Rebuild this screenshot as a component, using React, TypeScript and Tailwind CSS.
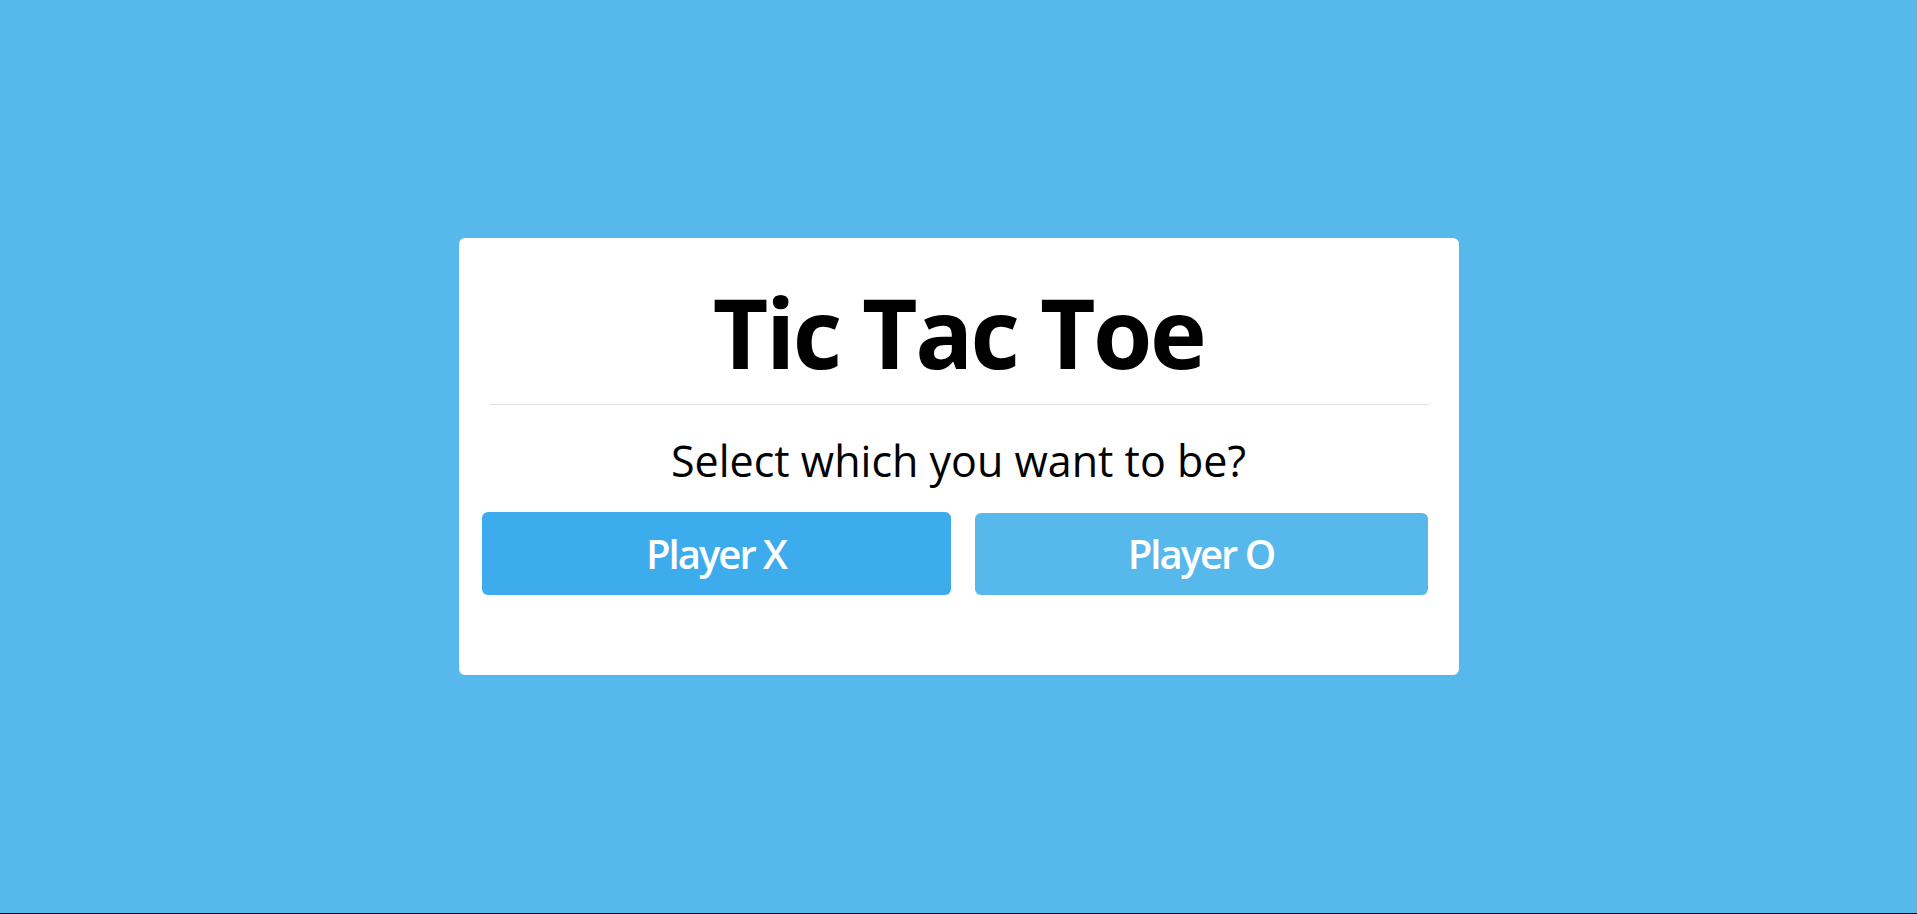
import { useState } from 'react'

export default function App() {
  const [player, setPlayer] = useState<'X' | 'O'>('X')

  return (
    <div
      className="flex h-screen items-center justify-center border-b border-black bg-[#57b9eb]"
      style={{ fontFamily: '"Open Sans", "Noto Sans", sans-serif' }}
    >
      <div className="w-[1000px] rounded-md bg-white pt-[46px] pb-[80px]">
        <h1 className="text-center text-[96px] leading-[96px] font-bold tracking-[-2.5px] text-black">Tic Tac Toe</h1>
        <div className="mx-[31px] mt-[24px] h-px bg-[#dddddd]" />
        <p className="mt-[34px] text-center text-[43px] leading-[43px] font-medium text-black">
          Select which you want to be?
        </p>
        <div className="mx-[23px] mt-[30px] flex items-center gap-[24px]">
          <button
            type="button"
            onClick={() => setPlayer('X')}
            className="h-[83px] w-[469px] rounded-md bg-[#3daced] text-[40px] leading-[40px] font-semibold tracking-[-2px] text-white"
          >
            Player X
          </button>
          <button
            type="button"
            onClick={() => setPlayer('O')}
            className="h-[82px] w-[453px] rounded-md bg-[#57b9eb] text-[40px] leading-[40px] font-semibold tracking-[-2px] text-white"
          >
            Player O
          </button>
        </div>
      </div>
    </div>
  )
}
